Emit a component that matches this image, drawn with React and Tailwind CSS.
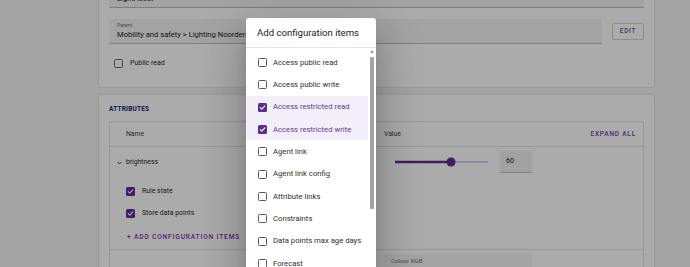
const PURPLE = "#5c2d91";

function Check({ checked, dark }) {
  if (checked) {
    return (
      <span className="w-[9px] h-[9px] rounded-[1.5px] bg-[#5c2d91] flex items-center justify-center shrink-0">
        <svg width="7" height="7" viewBox="0 0 8 8">
          <path d="M1.4 4.1 L3.2 5.9 L6.7 2.1" fill="none" stroke="#ffffff" strokeWidth="1.2" strokeLinecap="round" strokeLinejoin="round" />
        </svg>
      </span>
    );
  }
  return (
    <span
      className={
        "w-[9px] h-[9px] rounded-[1.5px] border-[1.5px] shrink-0 " +
        (dark ? "border-[#5a5a5a]" : "border-[#666666]")
      }
    />
  );
}

function FilledField({ label, value, className }) {
  return (
    <div className={"h-[25px] bg-[#f4f4f4] border-b-[1.5px] border-[#bdbdbd] px-[8px] pt-[3px] " + (className || "")}>
      <div className="h-[6px] leading-[6px] text-[5.2px] text-[#707070]">{label}</div>
      <div className="mt-[2px] h-[10px] leading-[10px] text-[7.6px] text-[#1a1a1a] whitespace-nowrap overflow-hidden">{value}</div>
    </div>
  );
}

const items = [
  { t: "Access public read", c: false },
  { t: "Access public write", c: false },
  { t: "Access restricted read", c: true },
  { t: "Access restricted write", c: true },
  { t: "Agent link", c: false },
  { t: "Agent link config", c: false },
  { t: "Attribute links", c: false },
  { t: "Constraints", c: false },
  { t: "Data points max age days", c: false },
  { t: "Forecast", c: false },
  { t: "Format", c: false },
];

export default function App() {
  return (
    <div className="relative w-[690px] h-[267px] overflow-hidden bg-[#f3f3f5] font-['Roboto',sans-serif]">
      <div className="ml-[98px] w-[557px] flex flex-col">
        {/* Card 1 */}
        <div className="-mt-[28px] bg-white border border-[#e4e4e4] rounded-[3px] px-[10px] pt-[10px] pb-[16px]">
          <FilledField label="Name" value="LightAsset" className="border-b-2 border-[#aaaaaa]" />
          <div className="mt-[11px] flex items-center gap-[10px]">
            <FilledField label="Parent" value="Mobility and safety > Lighting Noorderplantsoen" className="flex-1" />
            <div className="w-[32px] h-[17px] border border-[#d2d2d2] rounded-[2px] flex items-center justify-center text-[6.5px] font-medium tracking-[0.7px] text-[#6a4a96]">
              EDIT
            </div>
          </div>
          <div className="mt-[11px] h-[16px] flex items-center pl-[5px] gap-[7px] pt-[1px]">
            <Check checked={false} />
            <span className="text-[7px] text-[#1f1f1f]">Public read</span>
          </div>
        </div>

        {/* Card 2 */}
        <div className="mt-[6px] bg-white border border-[#e4e4e4] rounded-[3px] px-[10px] pt-[9px] h-[200px]">
          <div className="h-[10px] leading-[10px] text-[6.5px] font-bold tracking-[0.2px] text-[#24206a]">ATTRIBUTES</div>
          <div className="mt-[7px] border border-[#e2e2e2] rounded-[2px]">
            {/* header */}
            <div className="h-[25px] flex items-center border-b border-[#e2e2e2] pt-[1px]">
              <div className="w-[274px] pl-[16px] text-[6.8px] text-[#404040]">Name</div>
              <div className="flex-1 text-[6.8px] text-[#404040]">Value</div>
              <div className="pr-[7px] text-[6.5px] font-medium tracking-[0.8px] text-[#6a40a8]">EXPAND ALL</div>
            </div>
            {/* brightness */}
            <div className="border-b border-[#e2e2e2]">
              <div className="h-[30px] flex items-center">
                <div className="w-[274px] pl-[7px] flex items-center gap-[4px] pt-[1px]">
                  <svg width="5" height="4" viewBox="0 0 5 4">
                    <path d="M0.6 0.9 L2.5 2.9 L4.4 0.9" fill="none" stroke="#333" strokeWidth="1" />
                  </svg>
                  <span className="text-[6.8px] text-[#1f1f1f]">brightness</span>
                </div>
                <div className="flex-1 flex items-center">
                  <svg className="ml-[11px]" width="93" height="10" viewBox="0 0 93 10">
                    <line x1="0" y1="5" x2="93" y2="5" stroke="#c9b9e0" strokeWidth="1.5" />
                    <line x1="0" y1="5" x2="56" y2="5" stroke={PURPLE} strokeWidth="2.5" strokeLinecap="round" />
                    <circle cx="56" cy="5" r="4.5" fill={PURPLE} />
                  </svg>
                  <div className="ml-[12px] w-[32px] h-[22px] bg-[#f0f0f0] border-b-[1.5px] border-[#c4c4c4] pl-[6px] flex items-center text-[7px] text-[#1a1a1a]">
                    60
                  </div>
                </div>
              </div>
              <div className="pt-[3px]">
                <div className="h-[22px] flex items-center pl-[16px] gap-[7px]">
                  <Check checked={true} />
                  <span className="text-[6.9px] text-[#1f1f1f]">Rule state</span>
                </div>
                <div className="h-[22px] flex items-center pl-[16px] gap-[7px]">
                  <Check checked={true} />
                  <span className="text-[6.9px] text-[#1f1f1f]">Store data points</span>
                </div>
                <div className="h-[25px] flex items-center pl-[17px] pt-[2px] text-[6.6px] font-medium tracking-[0.85px] text-[#6a40a8] whitespace-nowrap">
                  + ADD CONFIGURATION ITEMS
                </div>
              </div>
            </div>
            {/* colourRGB */}
            <div className="flex pt-[4px]">
              <div className="w-[274px] pl-[7px] pt-[10px] flex items-center gap-[4px]">
                <svg width="4" height="5" viewBox="0 0 4 5">
                  <path d="M0.9 0.6 L2.9 2.5 L0.9 4.4" fill="none" stroke="#333" strokeWidth="1" />
                </svg>
                <span className="text-[6.8px] text-[#1f1f1f]">colourRGB</span>
              </div>
              <div className="flex-1">
                <div className="w-[148px] h-[25px] bg-[#f5f5f5] pl-[7px] pt-[4px]">
                  <div className="h-[6px] leading-[6px] text-[6.2px] text-[#707070]">Colour RGB</div>
                </div>
              </div>
            </div>
          </div>
        </div>
      </div>

      {/* backdrop */}
      <div className="absolute inset-0 bg-black/[0.33]" />

      {/* dialog */}
      <div className="absolute left-[246px] top-[18px] w-[130px] h-[300px] bg-white rounded-[3px] flex flex-col shadow-[0px_11px_15px_-7px_rgba(0,0,0,0.2),0px_24px_38px_3px_rgba(0,0,0,0.14),0px_9px_46px_8px_rgba(0,0,0,0.12)]">
        <div className="h-[30px] shrink-0 flex items-center pl-[11px] pt-[1px] text-[9.6px] text-[#212121] border-b border-[#e4e4e4] whitespace-nowrap">
          Add configuration items
        </div>
        <div className="flex flex-1">
          <div className="flex-1 pt-[3px]">
            {items.map((it) => (
              <div
                key={it.t}
                className={
                  "h-[22.3px] flex items-center pl-[12px] gap-[6px] pt-[1px] " + (it.c ? "bg-[#f3eff8]" : "")
                }
              >
                <Check checked={it.c} dark />
                <span className={"text-[7.7px] whitespace-nowrap " + (it.c ? "text-[#5e3a96]" : "text-[#2e2e2e]")}>
                  {it.t}
                </span>
              </div>
            ))}
          </div>
          <div className="w-[8px] flex flex-col pt-[2px] pl-[2px]">
            <svg width="4" height="3" viewBox="0 0 4 3">
              <path d="M0 3 L2 0 L4 3 Z" fill="#a0a0a0" />
            </svg>
            <div className="mt-[4px] w-[4px] h-[152px] bg-[#a3a3a3] rounded-[1px]" />
          </div>
        </div>
      </div>
    </div>
  );
}
